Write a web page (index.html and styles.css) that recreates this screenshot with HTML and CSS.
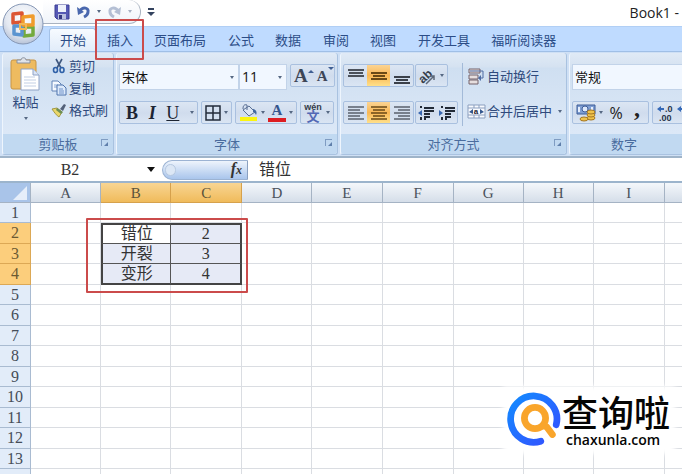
FILE: index.html
```html
<!DOCTYPE html>
<html lang="zh-CN">
<head>
<meta charset="utf-8">
<title>Book1</title>
<link rel="stylesheet" href="styles.css">
</head>
<body>
<header class="titlebar">
  <div class="quick">
    <button aria-label="保存"><svg width="16" height="16" viewBox="0 0 16 16"><path d="M1 1h14v14H3l-2-2z" fill="#5558b4" stroke="#3c3f95"/><path d="M4 1h8v7H4z" fill="#eef1fb"/><path d="M4 10h8v5H4z" fill="#b9bfdf"/><path d="M5 11h3v4H5z" fill="#34377f"/></svg></button>
    <button aria-label="撤消"><svg width="15" height="15" viewBox="0 0 15 15"><path d="M4 7C7 2 13 4 12 8c0 3-2 4-4 5" fill="none" stroke="#4a68ae" stroke-width="3"/><path d="M1 3l1 8 6-3z" fill="#4a68ae"/></svg></button>
    <i class="caret"></i>
    <button aria-label="恢复"><svg width="15" height="15" viewBox="0 0 15 15"><path d="M11 7C8 2 2 4 3 8c0 3 2 4 4 5" fill="none" stroke="#b4bfd4" stroke-width="3"/><path d="M14 3l-1 8-6-3z" fill="#b4bfd4"/></svg></button>
    <i class="caret pale"></i>
  </div>
  <button class="more" aria-label="自定义快速访问工具栏"><svg width="8" height="8" viewBox="0 0 8 8"><path d="M1 0h6v2H1zM0 4h8L4 8z" fill="#34435f"/></svg></button>
  <h1>Book1 -</h1>
  <button class="office" aria-label="Office 按钮"><svg width="42" height="42" viewBox="0 0 42 42"><defs><radialGradient id="orb" cx="50%" cy="35%" r="65%"><stop offset="0" stop-color="#fff"/><stop offset=".65" stop-color="#e3e8f1"/><stop offset="1" stop-color="#b7c3d8"/></radialGradient></defs><circle cx="21" cy="21" r="20" fill="url(#orb)" stroke="#8697b5"/><g fill="none" stroke-width="3.500" stroke-linejoin="round"><path d="M11 11l9-1v9l-9 1z" stroke="#dc5533"/><path d="M22 24h9v8l-9 1z" stroke="#74aa3d"/><path d="M12 23h8v9l-8-1z" stroke="#5b94d0"/><path d="M21 14l10-1v9H21z" stroke="#f09c2c"/></g><path d="M18 21h6v5h-6z" fill="none" stroke="#f2b855" stroke-width="2"/></svg></button>
</header>

<nav class="tabs">
  <button class="active">开始</button>
  <button class="marked">插入</button>
  <button>页面布局</button>
  <button>公式</button>
  <button>数据</button>
  <button>审阅</button>
  <button>视图</button>
  <button>开发工具</button>
  <button>福昕阅读器</button>
</nav>

<main>
<div class="ribbon">
  <section class="group">
    <div class="body clipboard">
      <button class="paste"><svg width="31" height="34" viewBox="0 0 31 34"><rect x="1" y="3" width="25" height="29" rx="2" fill="#eebb60" stroke="#c89544"/><path d="M7 6V3h4c0-3 5-3 5 0h4v3z" fill="#e0e4ea" stroke="#888f9c"/><path d="M11 12h12l6 6v15H11z" fill="#fff" stroke="#8ea2c6"/><path d="M23 12v6h6" fill="#dbe5f5" stroke="#8ea2c6"/><path d="M14 20h11M14 23h12M14 26h12M14 29h12" stroke="#c2cfe4"/></svg><span>粘贴</span><i class="caret"></i></button>
      <div class="clips">
        <button><svg width="16" height="16" viewBox="0 0 16 16"><path d="M5 1l5 9M11 1L6 10" stroke="#3f587f" stroke-width="1.6"/><ellipse cx="4.500" cy="12" rx="2" ry="2.500" fill="none" stroke="#2f61a8" stroke-width="1.600"/><ellipse cx="11" cy="12" rx="2" ry="2.500" fill="none" stroke="#2f61a8" stroke-width="1.600"/></svg>剪切</button>
        <button><svg width="16" height="16" viewBox="0 0 16 16"><path d="M1 1h6l3 3v7H1z" fill="#f5f9ff" stroke="#6384b8"/><path d="M3 5h4M3 7h4" stroke="#86a4d2"/><path d="M6 5h6l3 3v7H6z" fill="#dce9fb" stroke="#4f74ae"/><path d="M8 9h4M8 11h5M8 13h5" stroke="#6e92c9"/></svg>复制</button>
        <button><svg width="16" height="16" viewBox="0 0 16 16"><path d="M9 7l4-5 2 1-3 6z" fill="#53617a"/><path d="M1 7l5-1 5 4-3 5c-2-1-5-5-7-8z" fill="#e9d66a" stroke="#a39842"/><path d="M6 6l6 4-2 2-5-4z" fill="#6d8f55"/></svg>格式刷</button>
      </div>
    </div>
    <h2>剪贴板<i class="launch"></i></h2>
  </section>

  <section class="group">
    <div class="body rows">
      <div class="row top">
        <label class="combo family"><select aria-label="字体"><option>宋体</option></select><i class="caret"></i></label>
        <label class="combo size"><select aria-label="字号"><option>11</option></select><i class="caret"></i></label>
        <div class="set grow"><button class="serif big" aria-label="增大字号">A<i class="up"></i></button><button class="serif small" aria-label="减小字号">A<i class="down"></i></button></div>
      </div>
      <div class="row">
        <div class="set style"><button class="serif bold">B</button><button class="serif italic">I</button><button class="serif under">U</button><i class="caret"></i></div>
        <div class="set"><button aria-label="边框"><svg width="16" height="16" viewBox="0 0 16 16"><path d="M1 1h14v14H1zM8 1v14M1 8h14" fill="none" stroke="#222b3a" stroke-width="1.500"/></svg></button><i class="caret"></i></div>
        <div class="set"><button aria-label="填充颜色"><svg width="19" height="18" viewBox="0 0 19 18"><path d="M4 6l6-4 6 6-6 4z" fill="#dce6f4" stroke="#576d92"/><path d="M8 6V1c-3-1-4 1-4 4" fill="none" stroke="#576d92"/><path d="M14 5c4 1 4 4 3 6-1-2-2-3-3-3z" fill="#41689f"/><path d="M1 13h17v4H1z" fill="#fbf510"/></svg></button><i class="caret"></i><button class="serif color" aria-label="字体颜色">A</button><i class="caret"></i></div>
        <div class="set"><button aria-label="拼音指南"><svg width="19" height="20" viewBox="0 0 19 20"><text x="9" y="7" text-anchor="middle" class="py">wén</text><text x="9" y="18" text-anchor="middle" class="wen">文</text></svg></button><i class="caret"></i></div>
      </div>
    </div>
    <h2>字体<i class="launch"></i></h2>
  </section>

  <section class="group">
    <div class="body align">
      <div class="rows">
        <div class="row top">
          <div class="set thirds"><button aria-label="顶端对齐"><svg width="16" height="18"><path d="M0 3h16M1 6h14M0 9h16" stroke="#4b515b" stroke-width="2"/></svg></button><button class="on" aria-label="垂直居中"><svg width="16" height="18"><path d="M0 6h16M2 9h12M0 12h16" stroke="#6a4a17" stroke-width="2"/></svg></button><button aria-label="底端对齐"><svg width="16" height="18"><path d="M0 10h16M2 13h12M0 16h16" stroke="#3b4049" stroke-width="2"/></svg></button></div>
          <div class="set"><button aria-label="方向"><svg width="18" height="18" viewBox="0 0 18 18"><text x="0" y="13" class="ab" transform="rotate(-42 7 10)">ab</text><path d="M7 17l8-8M11 9h4v4" fill="none" stroke="#5d6879" stroke-width="1.500"/></svg></button><i class="caret"></i></div>
        </div>
        <div class="row">
          <div class="set thirds"><button aria-label="左对齐"><svg width="16" height="14"><path d="M0 1h16M0 4h12M0 7h16M0 10h12M0 13h16" stroke="#59606c" stroke-width="1.500"/></svg></button><button class="on" aria-label="居中"><svg width="16" height="14"><path d="M0 1h16M2 4h12M0 7h16M2 10h12M0 13h16" stroke="#6a4a17" stroke-width="1.500"/></svg></button><button aria-label="右对齐"><svg width="16" height="14"><path d="M0 1h16M4 4h12M0 7h16M4 10h12M0 13h16" stroke="#59606c" stroke-width="1.500"/></svg></button></div>
          <div class="set halves"><button aria-label="减少缩进量"><svg width="16" height="14"><path d="M6 2h10M6 5h10M6 8h6M6 11h6" stroke="#222a36" stroke-width="2"/><path d="M3 0v2M3 11v3M7 11v3" stroke="#222a36" stroke-width="2"/><path d="M0 7l4-3v6z" fill="#3867b0"/></svg></button><button aria-label="增加缩进量"><svg width="16" height="14"><path d="M6 2h10M6 5h10M6 8h6M6 11h6" stroke="#222a36" stroke-width="2"/><path d="M3 0v2M3 11v3M7 11v3" stroke="#222a36" stroke-width="2"/><path d="M4 7L0 4v6z" fill="#3867b0"/></svg></button></div>
        </div>
      </div>
      <div class="wraps">
        <button><svg width="17" height="17" viewBox="0 0 17 17"><path d="M1 1h11v4H1zM1 7h9v4H1zM1 12h9v4H1z" fill="#e6dede" stroke="#75636a"/><path d="M2 3h13v7h-3" fill="none" stroke="#4d6ba2"/><path d="M13 7v6l-3-3z" fill="#4d6ba2"/></svg>自动换行</button>
        <button><svg width="17" height="17" viewBox="0 0 17 17"><path d="M0 2h17v13H0z" fill="#f9fbff" stroke="#8b9fbf"/><path d="M0 5h17M0 12h17M6 2v3M11 2v3M6 12v3M11 12v3" stroke="#8b9fbf"/><path d="M5 6L1 9l4 2zM12 6l4 3-4 2z" fill="#34588f"/><text x="8" y="11" text-anchor="middle" class="mid">a</text></svg>合并后居中<i class="caret"></i></button>
      </div>
    </div>
    <h2>对齐方式<i class="launch"></i></h2>
  </section>

  <section class="group number">
    <div class="body rows">
      <div class="row top"><label class="combo format"><select aria-label="数字格式"><option>常规</option></select></label></div>
      <div class="row">
        <div class="set"><button aria-label="会计数字格式"><svg width="20" height="18" viewBox="0 0 20 18"><path d="M1 1h18v9H1z" fill="#7f9ed2" stroke="#3d5c98"/><circle cx="9" cy="5" r="3" fill="#dce8fb" stroke="#3d5c98"/><path d="M3 3v5M16 3v3" stroke="#e6effd" stroke-width="2"/><g fill="#efc24b" stroke="#a57622"><ellipse cx="15" cy="14" rx="4" ry="2"/><ellipse cx="15" cy="11" rx="4" ry="2"/><ellipse cx="15" cy="8" rx="4" ry="2"/><ellipse cx="8" cy="15" rx="4" ry="2"/></g></svg></button><i class="caret"></i><button class="pct">%</button><button class="comma">,</button></div>
        <div class="set"><button aria-label="增加小数位数"><svg width="18" height="18" viewBox="0 0 18 18"><path d="M1 5l4-3v2h3v2H5v2z" fill="#3569b7"/><text x="9" y="8" class="dec">.0</text><text x="3" y="17" class="dec">.00</text></svg></button><button aria-label="减少小数位数"><svg width="18" height="18" viewBox="0 0 18 18"><path d="M0 5l4-3v2h3v2H4v2z" fill="#3569b7"/><text x="8" y="8" class="dec">.0</text></svg></button></div>
      </div>
    </div>
    <h2>数字</h2>
  </section>
</div>

<div class="formula">
  <input class="name" aria-label="名称框" value="B2">
  <i class="caret dark"></i>
  <button class="fx" aria-label="插入函数"><i></i><span>f<small>x</small></span></button>
  <input class="value" aria-label="编辑栏" value="错位">
</div>

<div class="sheet">
  <table>
    <thead><tr><th class="corner"><i></i></th><th>A</th><th class="sel">B</th><th class="sel">C</th><th>D</th><th>E</th><th>F</th><th>G</th><th>H</th><th>I</th><th></th></tr></thead>
    <tbody>
      <tr><th>1</th><td></td><td></td><td></td><td></td><td></td><td></td><td></td><td></td><td></td><td></td></tr>
      <tr><th class="sel">2</th><td></td><td class="pick first t l">错位</td><td class="pick t r">2</td><td></td><td></td><td></td><td></td><td></td><td></td><td></td></tr>
      <tr><th class="sel">3</th><td></td><td class="pick l">开裂</td><td class="pick r">3</td><td></td><td></td><td></td><td></td><td></td><td></td><td></td></tr>
      <tr><th class="sel">4</th><td></td><td class="pick b l">变形</td><td class="pick b r last">4</td><td></td><td></td><td></td><td></td><td></td><td></td><td></td></tr>
      <tr><th>5</th><td></td><td></td><td></td><td></td><td></td><td></td><td></td><td></td><td></td><td></td></tr>
      <tr><th>6</th><td></td><td></td><td></td><td></td><td></td><td></td><td></td><td></td><td></td><td></td></tr>
      <tr><th>7</th><td></td><td></td><td></td><td></td><td></td><td></td><td></td><td></td><td></td><td></td></tr>
      <tr><th>8</th><td></td><td></td><td></td><td></td><td></td><td></td><td></td><td></td><td></td><td></td></tr>
      <tr><th>9</th><td></td><td></td><td></td><td></td><td></td><td></td><td></td><td></td><td></td><td></td></tr>
      <tr><th>10</th><td></td><td></td><td></td><td></td><td></td><td></td><td></td><td></td><td></td><td></td></tr>
      <tr><th>11</th><td></td><td></td><td></td><td></td><td></td><td></td><td></td><td></td><td></td><td></td></tr>
      <tr><th>12</th><td></td><td></td><td></td><td></td><td></td><td></td><td></td><td></td><td></td><td></td></tr>
      <tr><th>13</th><td></td><td></td><td></td><td></td><td></td><td></td><td></td><td></td><td></td><td></td></tr>
      <tr><th></th><td></td><td></td><td></td><td></td><td></td><td></td><td></td><td></td><td></td><td></td></tr>
    </tbody>
  </table>
  <div class="frame"></div>
</div>
</main>

<aside class="brand">
  <svg width="54" height="56" viewBox="0 0 56 58"><defs><linearGradient id="ring" x1="0" y1="0" x2="1" y2="1"><stop offset="0" stop-color="#138bff"/><stop offset="1" stop-color="#344fff"/></linearGradient></defs><path d="M34 52A24 24 0 1 1 50 35" fill="none" stroke="url(#ring)" stroke-width="7" stroke-linecap="round"/><circle cx="28" cy="28" r="11" fill="none" stroke="#f9a52b" stroke-width="7"/><path d="M36 36l4 1 6 8" fill="none" stroke="#f9a52b" stroke-width="7" stroke-linecap="round" stroke-linejoin="round"/></svg>
  <div><strong>查询啦</strong><span>chaxunla.com</span></div>
</aside>
</body>
</html>
```

FILE: styles.css
```css
* { box-sizing: border-box; }
body {
  margin: 0;
  height: 100vh;
  overflow: hidden;
  position: relative;
  background: #fff;
  color: #2f4a7c;
  font: 13px/18px "Open Sans", "Noto Sans CJK SC", sans-serif;
}
button, input, select { font: inherit; color: inherit; border: 0; padding: 0; margin: 0; background: none; }
button { display: flex; align-items: center; justify-content: center; white-space: nowrap; }
svg { flex: none; display: block; overflow: visible; }
h1, h2 { margin: 0; font: inherit; }

.caret { flex: none; width: 0; height: 0; border: 2px solid transparent; border-top: 3px solid #566883; border-bottom: 0; }
.caret.pale { border-top-color: #a8b2c4; }
.caret.dark { border-width: 5px 4px 0; border-top-color: #111; }

/* Title bar */
.titlebar { height: 26px; display: flex; align-items: flex-start; padding-left: 43px; position: relative; }
.quick { height: 24px; display: flex; align-items: center; gap: 6px; padding: 0 8px 0 11px; border: 1px solid #a8b2c0; border-top: 0; border-left: 0; border-radius: 0 12px 12px 0; background: linear-gradient(#fff, #f0f4fa); }
.more { height: 24px; margin-left: 6px; }
.titlebar h1 { margin-left: auto; padding: 4px 3px 0 0; color: #222; font-size: 14px; white-space: nowrap; }
.office { position: absolute; left: 2px; top: 3px; z-index: 3; }

/* Tabs */
.tabs { height: 25px; display: flex; padding-left: 49px; background: #bfdbff; border-top: 1px solid #b1cff5; }
.tabs button { padding: 0 11px 0 10px; color: #2c4d87; position: relative; margin-top: 1px; }
.tabs button:nth-child(even) { padding: 0 11px; }
.tabs .active { background: linear-gradient(#f7fbff, #e1ecf9); border: 1px solid #a4c2e8; border-bottom: 0; border-radius: 3px 3px 0 0; padding: 0 9px 0 10px; }
.tabs .marked::after, .frame { content: ""; position: absolute; border: 2px solid #cb4b4b; border-radius: 1px; }
.tabs .marked::after { inset: -9px 0 -9px -1px; z-index: 2; }

/* Ribbon */
.ribbon { display: flex; gap: 2px; padding: 1px 0 1px 2px; background: #cfe0f5; border-top: 1px solid #a0bfe6; border-bottom: 2px solid #9fb4c9; overflow: hidden; }
.group { flex: none; border-left: 1px solid #eef5fd; border-right: 1px solid #a9c2e0; border-bottom: 1px solid #a9c2e0; border-radius: 3px; background: linear-gradient(#e0eaf6 0, #d5e2f1 14px, #cfdff1 15px, #dce8f7 80px); }
.number { flex: 1 0 160px; border-right: 0; }
.group h2 { height: 20px; line-height: 20px; display: flex; justify-content: center; position: relative; background: #c1d9f1; color: #4a6c9e; border-radius: 0 0 3px 3px; }
.number h2 { justify-content: flex-start; padding-left: 41px; }
.launch { position: absolute; right: 5px; top: 5px; width: 7px; height: 7px; border-left: 1px solid #7f9cc2; border-top: 1px solid #7f9cc2; }
.launch::after { content: ""; position: absolute; right: 0; bottom: 0; border: 2px solid transparent; border-right-color: #5f7fab; border-bottom-color: #5f7fab; }
.body { height: 81px; }
.rows { display: flex; flex-direction: column; gap: 11px; padding: 11px 2px 0; }
.row { display: flex; gap: 3px; height: 22px; }
.row.top { height: 26px; }
.set { display: flex; align-items: center; height: 23px; border: 1px solid #a9c0df; border-radius: 2px; background: linear-gradient(#dce6f3 0, #d0dced 11px, #dae5f3); gap: 3px; padding: 0 3px; }
.combo { display: flex; align-items: center; background: #f1f7ff; border: 1px solid #c2d3e9; height: 26px; padding: 0 4px 0 2px; color: #111; }
.combo select { appearance: none; flex: 1; width: 0; outline: 0; }
.family { width: 120px; }
.size { width: 48px; font-size: 14px; margin-left: -3px; }
.format { flex: 1; }

.clipboard { width: 110px; display: flex; gap: 9px; padding: 4px 0 0 6px; }
.paste { flex-direction: column; justify-content: flex-start; gap: 2px; width: 33px; color: #2f4a7c; }
.paste .caret { margin-top: 4px; }
.clips { display: flex; flex-direction: column; gap: 4px; }
.clips button { height: 18px; gap: 2px; justify-content: flex-start; }

.serif { font-family: "Liberation Serif", serif; color: #1c2433; }
.grow { width: 45px; padding: 0 3px; justify-content: space-around; }
.big { font-size: 19px; font-weight: bold; color: #3d4657; }
.small { font-size: 15px; font-weight: bold; color: #3d4657; }
.up, .down { border: 3px solid transparent; align-self: flex-start; }
.up { border-bottom-color: #3f5f93; border-top: 0; margin-top: 3px; }
.down { border-top-color: #3f5f93; border-bottom: 0; }
.style { width: 79px; justify-content: space-between; padding: 0 3px 0 6px; }
.bold { font-size: 18px; font-weight: bold; }
.italic { font-size: 18px; font-style: italic; font-weight: bold; }
.under { font-size: 18px; text-decoration: underline; }
.color { width: 18px; height: 18px; font-size: 15px; line-height: 13px; color: #34558c; border-bottom: 4px solid #dd1d22; font-weight: bold; }
.py { font: bold 9px "Liberation Sans", sans-serif; fill: #333b49; }
.wen { font: bold 13px "Noto Sans CJK SC", sans-serif; fill: #5268b5; }
.ab { font: bold 12px "Liberation Sans", sans-serif; fill: #343c49; }
.mid { font: bold 8px "Liberation Sans", sans-serif; fill: #223; }
.dec { font: bold 9px "Liberation Sans", sans-serif; fill: #28344a; }

.align { display: flex; gap: 2px; }
.align .row { gap: 1px; }
.thirds { padding: 0; gap: 0; }
.thirds button { width: 23px; height: 21px; }
.halves { padding: 0 2px; gap: 5px; }
.on { background: linear-gradient(#fbd493, #f9b754 50%, #ffe08a); }
.wraps { display: flex; flex-direction: column; gap: 9px; margin-top: 10px; padding: 0 4px 0 5px; height: 63px; border-left: 1px solid #a3bad8; }
.wraps button { height: 26px; gap: 2px; justify-content: flex-start; }
.wraps .caret { margin-left: 4px; }
.pct { font-size: 16px; color: #222; width: 20px; }
.comma { font: bold 24px/8px "Liberation Serif", serif; color: #222; width: 16px; padding-bottom: 10px; }

/* Formula bar */
.formula { height: 23px; display: flex; align-items: center; background: #fff; font: 16px/20px "Liberation Serif", "Noto Sans CJK SC", serif; color: #333; }
.formula input { outline: 0; height: 20px; min-width: 0; }
.name { width: 140px; text-align: center; margin-right: 7px; }
.fx { width: 86px; height: 20px; margin-left: 7px; justify-content: space-between; padding: 0 5px 0 2px; border: 1px solid #9cb3d3; border-right-color: #8aa0c0; border-radius: 11px 0 0 11px; background: linear-gradient(#eef4fc, #a9c5ec); font-style: italic; font-weight: bold; }
.fx i { width: 11px; height: 12px; border-radius: 6px; background: #dce7f5; border: 1px solid #b6c8e0; }
.fx small { font-size: 12px; }
.value { flex: 1; padding-left: 11px; }

/* Worksheet */
.sheet { position: relative; overflow: hidden; border-top: 2px solid #9cb4cc; }
table { width: 735px; table-layout: fixed; border-collapse: separate; border-spacing: 0; font: 16px/18px "Liberation Serif", "Noto Sans CJK SC", serif; color: #333; }
th, td { padding: 0; height: 20px; overflow: hidden; text-align: center; font-weight: normal; border-right: 1px solid #dadde2; border-bottom: 1px solid #dadde2; }
tbody tr:nth-child(even) > * { height: 21px; }
thead th { width: 70px; height: 20px; font-size: 15px; background: linear-gradient(#f4f7fb, #d5dee9); border-color: #a5b3c4; color: #4b525c; }
thead th:nth-child(3n + 4) { width: 71px; }
thead .corner { width: 31px; background: #a9c4e9; }
.corner i { display: block; width: 0; height: 0; margin: 0 3px 0 auto; border: 7px solid transparent; border-right-color: #e6eefa; border-bottom-color: #e6eefa; }
tbody th { background: #e2ecf9; border-color: #a9bbd1; color: #454d58; }
thead .sel { background: linear-gradient(#f8d593, #f0bb5b); border-color: #d6a14c; color: #5b533a; }
tbody .sel { background: #fcce7c; border-color: #dca855; color: #6b5a33; }
.pick { background: #e6eaf6; border-color: #555; line-height: 16px; }
.first { background: #fff; }
.t { border-top: 2px solid #444; }
.l { border-left: 2px solid #444; }
.r { border-right: 2px solid #444; }
.b { border-bottom: 2px solid #444; }
.frame { left: 86px; top: 35px; width: 162px; height: 75px; }

/* Site mark */
.brand { position: absolute; right: 12px; bottom: 25px; display: flex; align-items: flex-start; background: #fff; box-shadow: 0 0 5px 5px #fff; color: #050505; }
.brand div { display: flex; flex-direction: column; }
.brand strong { font: 500 36px/40px "Noto Sans CJK SC", sans-serif; }
.brand span { font: 600 14px/18px "Open Sans", sans-serif; padding-left: 4px; }
```
